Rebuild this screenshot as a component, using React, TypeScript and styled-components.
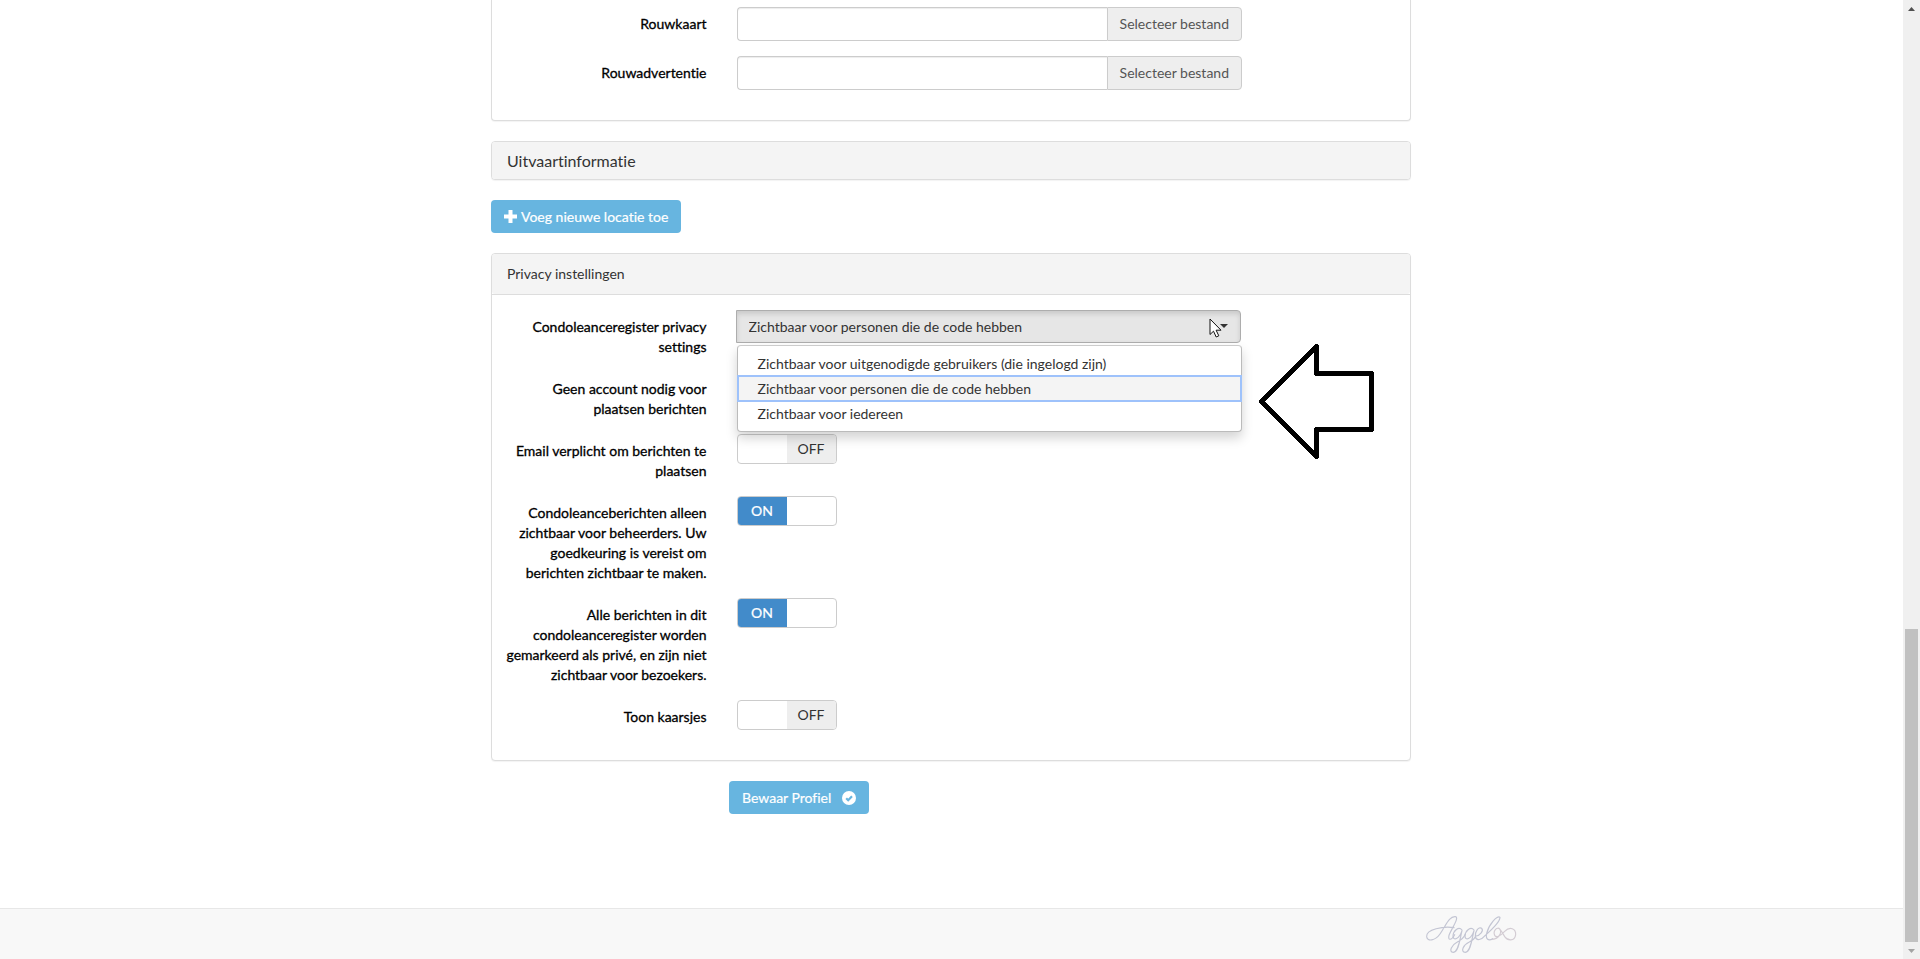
import React, { useState } from 'react';
import styled, { createGlobalStyle, css } from 'styled-components';

const GlobalStyle = createGlobalStyle`
  *, *::before, *::after { box-sizing: border-box; }
  body {
    margin: 0;
    background: #fff;
    color: #333;
    font: 14px/20px Lato, "Liberation Sans", sans-serif;
    font-variant-ligatures: no-common-ligatures;
  }
  button, input, select { font: inherit; font-variant-ligatures: inherit; }
`;

const Shell = styled.div`
  display: grid;
  grid-template-columns: 1fr 17px;
  min-height: 100vh;
`;

const Page = styled.div`
  display: flex;
  flex-direction: column;
`;

const Content = styled.form`
  width: 100%;
  max-width: 921px;
  margin: 0 auto;
  padding-right: 1px;
  display: flex;
  flex-direction: column;
  align-items: flex-start;
  gap: 20px;
`;

const Panel = styled.section<{ $continued?: boolean }>`
  width: 100%;
  background: #fff;
  border: 1px solid #ddd;
  border-radius: 4px;
  box-shadow: 0 1px 1px rgba(0, 0, 0, 0.05);
  ${(p) => p.$continued && css`
    border-top: 0;
    border-top-left-radius: 0;
    border-top-right-radius: 0;
  `}
`;

const PanelTitle = styled.h3<{ $large?: boolean }>`
  margin: 0;
  padding: 10px 15px;
  background: #f4f4f4;
  border-radius: 3px;
  font-weight: 400;
  font-size: ${(p) => (p.$large ? '16px' : '14px')};
  line-height: ${(p) => (p.$large ? '17px' : '20px')};
`;

const PanelBody = styled.div<{ $tight?: boolean }>`
  position: relative;
  padding: ${(p) => (p.$tight ? '7px' : '15px')} 0 15px;
  ${(p) => !p.$tight && 'border-top: 1px solid #ddd;'}
`;

const Row = styled.div`
  display: grid;
  grid-template-columns: 3fr 7fr 2fr;
  align-items: start;
  margin-bottom: 15px;
`;

const RowLabel = styled.label`
  padding: 7px 15px 0 12px;
  text-align: right;
  color: #000;
  -webkit-text-stroke: 0.3px #000;
`;

const Field = styled.div`
  position: relative;
  margin: 0 15px;
`;

const FileGroup = styled.div`
  display: flex;
`;

const FileName = styled.input`
  flex: 1;
  min-width: 0;
  height: 34px;
  padding: 6px 12px;
  border: 1px solid #ccc;
  border-right: 0;
  border-radius: 4px 0 0 4px;
  box-shadow: inset 0 1px 1px rgba(0, 0, 0, 0.075);
  background: #fff;
`;

const FileButton = styled.button`
  height: 34px;
  padding: 0 12px;
  border: 1px solid #ccc;
  border-radius: 0 4px 4px 0;
  background: #eee;
  color: #555;
`;

const PrimaryButton = styled.button`
  display: inline-flex;
  align-items: center;
  height: 33px;
  padding: 0 13px;
  border: 0;
  border-radius: 4px;
  background: #67b5e0;
  color: #fff;
  -webkit-text-stroke: 0.2px #fff;
`;

const PlusIcon = styled.svg`
  width: 13px;
  height: 13px;
  margin-right: 4px;
`;

const CheckIcon = styled.svg`
  width: 14px;
  height: 14px;
  margin-left: 11px;
`;

const SaveArea = styled.div`
  padding-left: 238px;
`;

const Picker = styled.div`
  position: relative;
  margin: 0 1px 0 -1px;
`;

const PickerSelect = styled.select`
  display: block;
  width: 100%;
  height: 33px;
  padding: 0 12px;
  appearance: none;
  border: 1px solid #adadad;
  border-radius: 0 4px 4px 0;
  background: #e6e6e6;
  box-shadow: inset 0 3px 5px rgba(0, 0, 0, 0.125);
  color: #333;
`;

const Caret = styled.svg`
  position: absolute;
  right: 13px;
  top: 14px;
  width: 8px;
  height: 4px;
  pointer-events: none;
`;

const Pointer = styled.svg`
  position: absolute;
  right: 19px;
  top: 8px;
  width: 13px;
  height: 20px;
  pointer-events: none;
`;

const Menu = styled.ul`
  position: absolute;
  z-index: 2;
  top: 100%;
  left: 0;
  right: 0;
  margin: 2px 0 0;
  padding: 5px 0;
  list-style: none;
  background: #fff;
  border: 1px solid #bbb;
  border-top-color: #ccc;
  border-radius: 4px;
  box-shadow: 0 6px 12px rgba(0, 0, 0, 0.175);
`;

const MenuItem = styled.button<{ $active: boolean }>`
  display: block;
  width: 100%;
  height: 25px;
  padding: 0 20px;
  border: 0;
  background: ${(p) => (p.$active ? '#f4f4f4' : 'transparent')};
  color: #333;
  text-align: left;
  ${(p) => p.$active && css`
    outline: 2px solid #9ec2fb;
    outline-offset: -1px;
  `}
`;

const Switch = styled.label`
  display: grid;
  grid-template-columns: 1fr 1fr;
  width: 100px;
  height: 30px;
  overflow: hidden;
  border: 1px solid #ccc;
  border-radius: 4px;
  background: #fff;
`;

const SwitchInput = styled.input`
  position: absolute;
  opacity: 0;
`;

const SwitchHalf = styled.span<{ $tone: 'on' | 'off' | 'blank' }>`
  text-align: center;
  line-height: 28px;
  ${(p) => p.$tone === 'on' && 'background: #428bca; color: #fff; -webkit-text-stroke: 0.2px #fff;'}
  ${(p) => p.$tone === 'off' && 'background: #eee;'}
`;

const Callout = styled.svg`
  position: absolute;
  top: 48px;
  right: 36px;
  width: 117px;
  height: 117px;
`;

const Footer = styled.footer`
  margin-top: auto;
  height: 51px;
  border-top: 1px solid #e7e7e7;
  background: #f8f8f8;
`;

const FooterInner = styled.div`
  display: flex;
  justify-content: flex-end;
  max-width: 1170px;
  margin: 0 auto;
  padding: 5px 19px 0;
`;

const Logo = styled.svg`
  width: 94px;
  height: 40px;
`;

const ScrollRail = styled.div`
  position: sticky;
  top: 0;
  height: 100vh;
  display: grid;
  grid-template-rows: 17px 612fr 313fr 17px;
  justify-items: center;
  align-items: center;
  background: #f0f0f0;
`;

const ScrollThumb = styled.div`
  grid-row: 3;
  align-self: stretch;
  width: 13px;
  background: #c1c1c1;
`;

const ScrollArrow = styled.svg<{ $row: number }>`
  grid-row: ${(p) => p.$row};
  width: 7px;
  height: 4px;
`;

const visibility = [
  'Zichtbaar voor uitgenodigde gebruikers (die ingelogd zijn)',
  'Zichtbaar voor personen die de code hebben',
  'Zichtbaar voor iedereen',
];

const switches = [
  { id: 'no-account', label: 'Geen account nodig voor plaatsen berichten', on: false },
  { id: 'email-required', label: 'Email verplicht om berichten te plaatsen', on: false },
  {
    id: 'moderated',
    label: 'Condoleanceberichten alleen zichtbaar voor beheerders. Uw goedkeuring is vereist om berichten zichtbaar te maken.',
    on: true,
  },
  {
    id: 'private',
    label: 'Alle berichten in dit condoleanceregister worden gemarkeerd als privé, en zijn niet zichtbaar voor bezoekers.',
    on: true,
  },
  { id: 'candles', label: 'Toon kaarsjes', on: false },
];

function FileRow({ id, label }: { id: string; label: string }) {
  return (
    <Row>
      <RowLabel htmlFor={id}>{label}</RowLabel>
      <Field>
        <FileGroup>
          <FileName id={id} type="text" />
          <FileButton type="button">Selecteer bestand</FileButton>
        </FileGroup>
      </Field>
    </Row>
  );
}

function SwitchRow({ id, label, on }: { id: string; label: string; on: boolean }) {
  const [checked, setChecked] = useState(on);
  return (
    <Row>
      <RowLabel htmlFor={id}>{label}</RowLabel>
      <Field>
        <Switch>
          <SwitchInput id={id} type="checkbox" checked={checked} onChange={() => setChecked(!checked)} />
          <SwitchHalf $tone={checked ? 'on' : 'blank'}>{checked ? 'ON' : ''}</SwitchHalf>
          <SwitchHalf $tone={checked ? 'blank' : 'off'}>{checked ? '' : 'OFF'}</SwitchHalf>
        </Switch>
      </Field>
    </Row>
  );
}

function PrivacyPicker() {
  const [value, setValue] = useState(visibility[1]);
  return (
    <Row>
      <RowLabel htmlFor="privacy">Condoleanceregister privacy settings</RowLabel>
      <Field>
        <Picker>
          <PickerSelect id="privacy" value={value} onChange={(e) => setValue(e.target.value)}>
            {visibility.map((v) => <option key={v}>{v}</option>)}
          </PickerSelect>
          <Caret viewBox="0 0 8 4"><path d="M0 0h8L4 4z" fill="#333" /></Caret>
          <Pointer viewBox="0 0 13 20">
            <path d="M1 1v15.500l3.500-3.300 2.700 5.800 2.600-1.200-2.700-5.600h4.900z" fill="#fff" stroke="#111" strokeWidth="1" />
          </Pointer>
        </Picker>
        <Menu>
          {visibility.map((v) => (
            <li key={v}>
              <MenuItem type="button" $active={v === value} onClick={() => setValue(v)}>{v}</MenuItem>
            </li>
          ))}
        </Menu>
      </Field>
    </Row>
  );
}

export default function App() {
  return (
    <>
      <GlobalStyle />
      <Shell>
        <Page>
          <Content onSubmit={(e) => e.preventDefault()}>
            <Panel $continued>
              <PanelBody $tight>
                <FileRow id="card" label="Rouwkaart" />
                <FileRow id="advert" label="Rouwadvertentie" />
              </PanelBody>
            </Panel>

            <Panel>
              <PanelTitle $large>Uitvaartinformatie</PanelTitle>
            </Panel>

            <PrimaryButton type="button">
              <PlusIcon viewBox="0 0 13 13" aria-hidden="true">
                <path d="M4.500 0h4v4.500H13v4H8.500V13h-4V8.500H0v-4h4.500z" fill="#fff" />
              </PlusIcon>
              Voeg nieuwe locatie toe
            </PrimaryButton>

            <Panel>
              <PanelTitle>Privacy instellingen</PanelTitle>
              <PanelBody>
                <PrivacyPicker />
                {switches.map((s) => <SwitchRow key={s.id} {...s} />)}
                <Callout viewBox="0 0 117 117" aria-hidden="true">
                  <path
                    d="M4.500 58.500 59.500 3.500V30.500H114.500V86.500H59.500V113.500z"
                    fill="none"
                    stroke="#000"
                    strokeWidth="5"
                    strokeLinejoin="round"
                    shapeRendering="crispEdges"
                  />
                </Callout>
              </PanelBody>
            </Panel>

            <SaveArea>
              <PrimaryButton type="submit">
                Bewaar Profiel
                <CheckIcon viewBox="0 0 14 14" aria-hidden="true">
                  <circle cx="7" cy="7" r="7" fill="#fff" />
                  <path d="M4.200 7.200l2 2L10 5.300" fill="none" stroke="#67b5e0" strokeWidth="2.200" />
                </CheckIcon>
              </PrimaryButton>
            </SaveArea>
          </Content>

          <Footer>
            <FooterInner>
              <Logo viewBox="132 72 282 120" role="img" aria-label="Aggelos">
                <g fill="none" stroke="#c3c5d3" strokeWidth="3.500" strokeLinecap="round" strokeLinejoin="round">
                  <path d="M222 113C190 108 138 118 140 140C142 156 166 152 180 132C198 106 208 78 226 80C240 82 212 120 207 136C203 152 214 152 224 134" />
                  <path d="M246 120C236 108 220 122 219 138C219 154 238 148 246 122C240 146 236 186 220 187C204 186 216 164 232 156C246 149 252 142 256 132" />
                  <path d="M282 120C272 108 256 122 255 138C255 154 274 148 282 122C276 146 272 186 256 187C240 186 250 164 268 156C278 151 284 146 288 138C300 136 312 122 305 115C296 108 284 126 286 140C289 154 304 150 316 136" />
                  <path d="M316 136C332 122 360 94 360 82C352 74 326 104 320 130C316 148 326 154 338 146" />
                </g>
                <path
                  d="M338 148C356 146 366 128 360 118C352 108 338 122 344 136C350 146 362 136 374 124C390 108 408 116 407 134C404 156 382 152 374 140C368 130 366 124 360 118"
                  fill="none"
                  stroke="#d3ccd3"
                  strokeWidth="3.500"
                  strokeLinecap="round"
                />
              </Logo>
            </FooterInner>
          </Footer>
        </Page>

        <ScrollRail aria-hidden="true">
          <ScrollArrow $row={1} viewBox="0 0 7 4"><path d="M0 4h7L3.500 0z" fill="#505050" /></ScrollArrow>
          <ScrollThumb />
          <ScrollArrow $row={4} viewBox="0 0 7 4"><path d="M0 0h7L3.500 4z" fill="#a3a3a3" /></ScrollArrow>
        </ScrollRail>
      </Shell>
    </>
  );
}
